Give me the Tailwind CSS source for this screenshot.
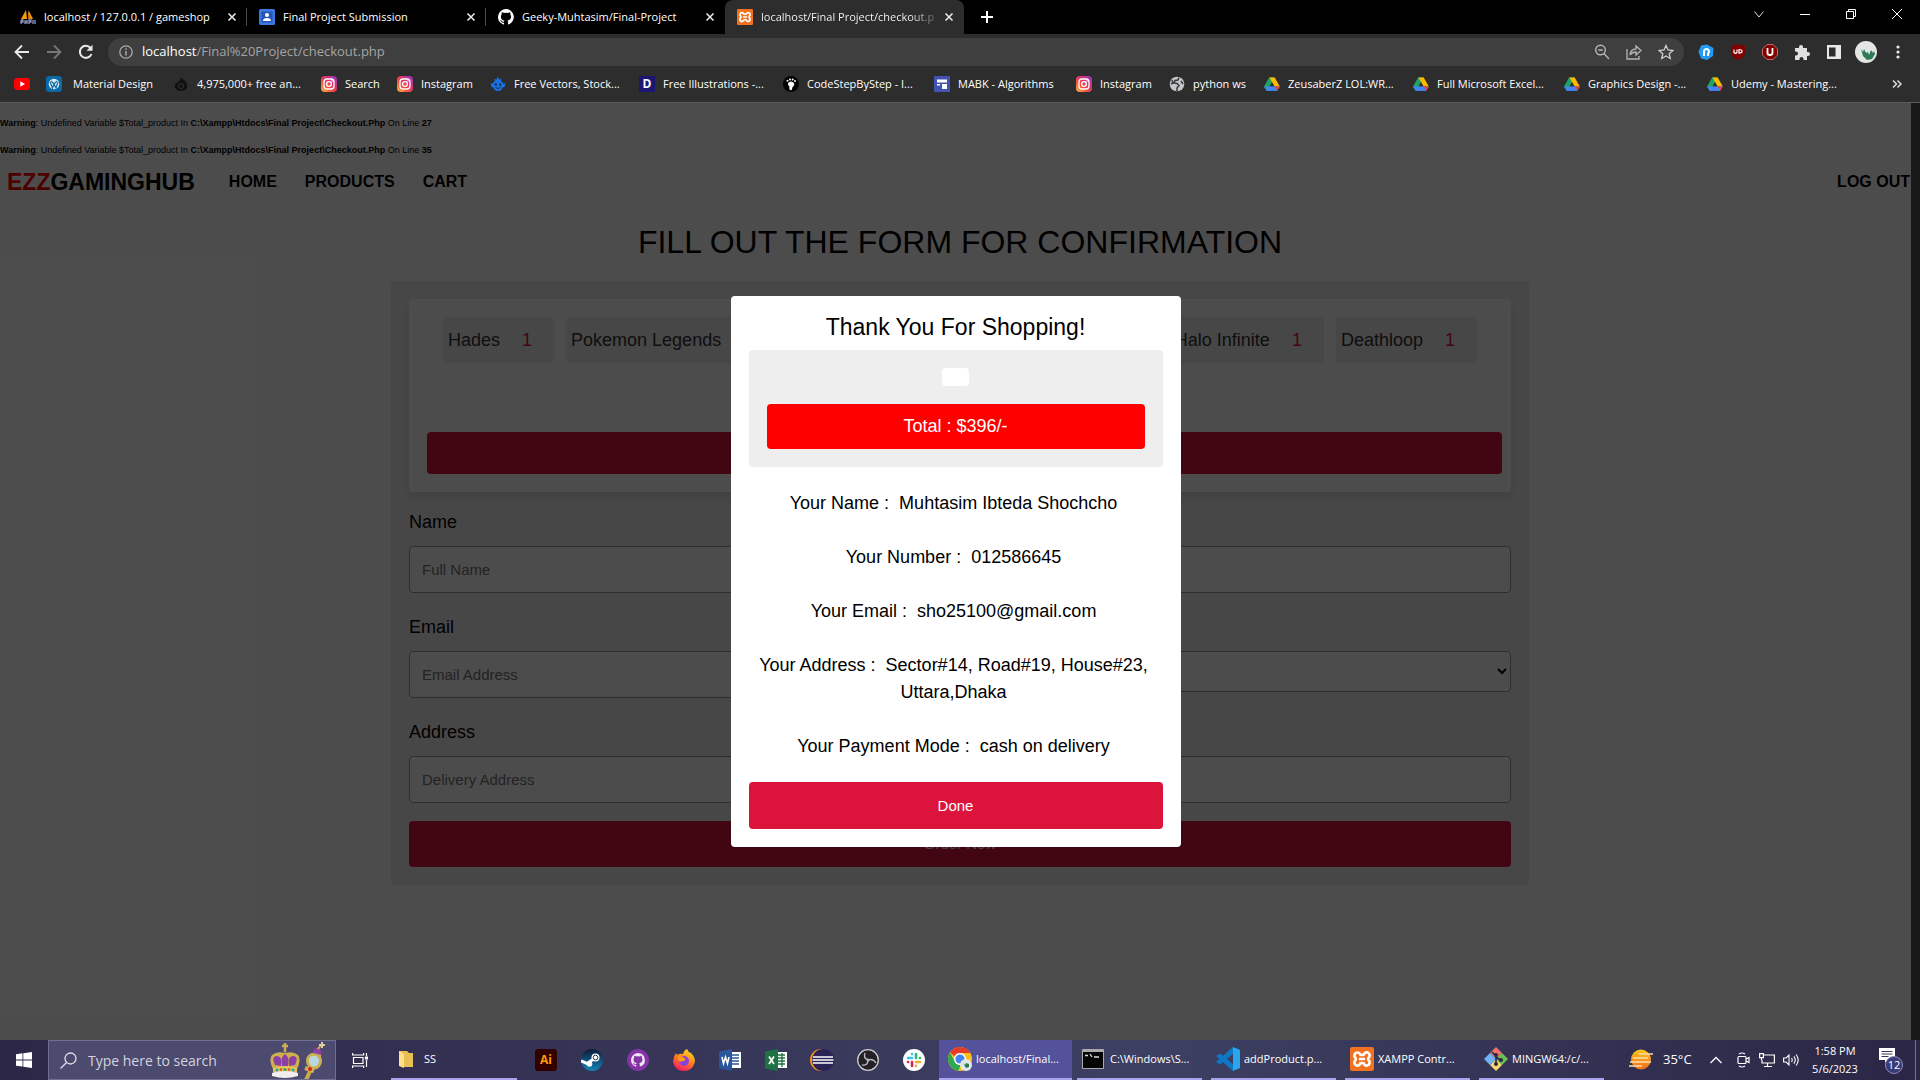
<!DOCTYPE html>
<html lang="en">
<head>
<meta charset="utf-8">
<title>localhost/Final Project/checkout.php</title>
<script src="https://cdn.jsdelivr.net/npm/@tailwindcss/browser@4"></script>
</head>
<body class="flex h-screen flex-col overflow-hidden bg-black font-['Open_Sans',sans-serif] text-white">

<svg class="absolute size-0" aria-hidden="true">
  <defs>
    <linearGradient id="ig" x1="0" y1="1" x2="1" y2="0"><stop offset="0" stop-color="#fdc04d"/><stop offset=".35" stop-color="#f4513a"/><stop offset=".65" stop-color="#d62e7c"/><stop offset="1" stop-color="#8a3ac8"/></linearGradient>
    <linearGradient id="steamg" x1="0" y1="0" x2="0" y2="1"><stop offset="0" stop-color="#0e1a38"/><stop offset="1" stop-color="#1484b8"/></linearGradient>
    <linearGradient id="ffg" x1=".8" y1="0" x2=".3" y2="1"><stop offset="0" stop-color="#ffe226"/><stop offset=".45" stop-color="#ff8a16"/><stop offset="1" stop-color="#f5156c"/></linearGradient>
    <linearGradient id="sung" x1="0" y1="0" x2="0" y2="1"><stop offset="0" stop-color="#ffc61a"/><stop offset="1" stop-color="#f26b1d"/></linearGradient>
    <symbol id="insta" viewBox="0 0 16 16"><rect width="16" height="16" rx="4" fill="url(#ig)"/><rect x="3" y="3" width="10" height="10" rx="3" fill="none" stroke="#fff" stroke-width="1.3"/><circle cx="8" cy="8" r="2.4" fill="none" stroke="#fff" stroke-width="1.3"/><circle cx="11" cy="5" r=".8" fill="#fff"/></symbol>
    <symbol id="drive" viewBox="0 0 16 16"><path d="M5.3 1.5h5.4L5.6 10.4 2.9 15 .2 10.400z" fill="#1ea362"/><path d="M5.300 1.500h5.400L15.800 10.400h-5.300z" fill="#ffba00"/><path d="M3.200 10.400h12.600L13.100 14.800H2.900L.2 10.400z" fill="#4285f4"/><path d="M5.300 1.500 8 6.200 5.600 10.400 2.900 14.800.2 10.400z" fill="#1ea362"/><path d="M10.500 10.400h5.300l-2.700 4.400z" fill="#ea4335"/><path d="M8 6.200l2.500 4.200H5.600z" fill="#2d2d2d"/><path d="M5.600 10.400H.2l2.700 4.400h10.200l-2.600-4.400z" fill="#4285f4"/></symbol>
    <symbol id="xampp" viewBox="0 0 24 24"><rect width="24" height="24" rx="2" fill="#f3721f"/><path d="M7.500 5.500a3 3 0 0 0-2 5.300q1 1.200 0 2.400a3 3 0 1 0 4.700 3.300q1.800-1 3.600 0a3 3 0 1 0 4.700-3.300q-1-1.200 0-2.400a3 3 0 1 0-4.700-3.300q-1.800 1-3.600 0a3 3 0 0 0-2.700-2zM9 12h6" fill="none" stroke="#fff" stroke-width="2.600"/></symbol>
    <symbol id="x" viewBox="0 0 10 10"><path d="M1.500 1.500l7 7m0-7l-7 7" stroke="#e8eaed" stroke-width="1.600"/></symbol>
    <symbol id="cat" viewBox="0 0 16 16"><path fill-rule="evenodd" d="M8 0a8 8 0 0 0-2.500 15.600c.4.100.5-.2.500-.4v-1.500c-2.200.5-2.700-.9-2.700-.9-.4-.9-.9-1.200-.9-1.200-.7-.5.100-.5.100-.5.800.1 1.200.8 1.200.8.700 1.300 1.900.9 2.300.7.100-.5.300-.9.500-1.100-1.800-.2-3.600-.9-3.600-4 0-.9.300-1.600.8-2.100-.1-.2-.4-1 .1-2.100 0 0 .7-.2 2.200.8a7.500 7.500 0 0 1 4 0c1.500-1 2.200-.8 2.200-.8.400 1.100.2 1.900.1 2.100.5.600.8 1.300.8 2.100 0 3.100-1.900 3.700-3.700 3.900.3.300.6.800.6 1.500v2.200c0 .2.100.5.600.4A8 8 0 0 0 8 0z"/></symbol>
  </defs>
</svg>

<!-- Tab strip -->
<header class="flex h-[34px] shrink-0 items-stretch pl-2 text-[11px]">
  <div class="flex w-[239px] items-center gap-2 pl-3 pr-2.5">
    <svg class="size-4 shrink-0" viewBox="0 0 16 16"><path d="M6 1l1 9H1zM9 2l4 8H9z" fill="#f89c0e"/><path d="M8 1v9h3z" fill="#c77a10"/><path d="M1 11v4M1 11h2v2H1M5 11v4M5 13h2M7 11v4M9 15v-4h2v2H9M13 11v4M15 11v4" stroke="#8f97c4" stroke-width="1.300" fill="none"/></svg>
    <span class="flex-1 overflow-hidden whitespace-nowrap">localhost / 127.0.0.1 / gameshop</span>
    <button aria-label="Close tab"><svg class="size-2.5"><use href="#x"/></svg></button>
  </div>
  <div class="my-2 -ml-px w-px bg-[#4a4a4a]"></div>
  <div class="flex w-[239px] items-center gap-2 pl-3 pr-2.5">
    <svg class="size-4 shrink-0" viewBox="0 0 16 16"><rect width="16" height="16" rx="1.500" fill="#3c78e0"/><rect x="2.500" y="2.500" width="11" height="11" fill="#2456b8"/><circle cx="8" cy="6" r="2" fill="#fff"/><path d="M4 12q0-3 4-3t4 3z" fill="#fff"/></svg>
    <span class="flex-1 overflow-hidden whitespace-nowrap">Final Project Submission</span>
    <button aria-label="Close tab"><svg class="size-2.5"><use href="#x"/></svg></button>
  </div>
  <div class="my-2 -ml-px w-px bg-[#4a4a4a]"></div>
  <div class="flex w-[239px] items-center gap-2 pl-3 pr-2.5">
    <svg class="size-4 shrink-0 fill-white"><use href="#cat"/></svg>
    <span class="flex-1 overflow-hidden whitespace-nowrap">Geeky-Muhtasim/Final-Project</span>
    <button aria-label="Close tab"><svg class="size-2.5"><use href="#x"/></svg></button>
  </div>
  <div class="flex w-[239px] items-center gap-2 rounded-t-lg bg-[#2d2d2d] pl-3 pr-2.5">
    <svg class="size-4 shrink-0"><use href="#xampp"/></svg>
    <span class="flex-1 overflow-hidden whitespace-nowrap bg-linear-to-r from-white from-85% to-white/20 bg-clip-text text-transparent">localhost/Final Project/checkout.p</span>
    <button aria-label="Close tab"><svg class="size-2.5"><use href="#x"/></svg></button>
  </div>
  <button class="ml-4 flex items-center" aria-label="New tab"><svg class="size-3.5" viewBox="0 0 14 14"><path d="M7 1v12M1 7h12" stroke="#fff" stroke-width="2"/></svg></button>
  <div class="ml-auto flex h-7 items-center">
    <button class="flex w-[46px] justify-center" aria-label="Search tabs"><svg class="size-3" viewBox="0 0 12 12"><path d="M1.500 3.500L6 9l4.500-5.500" fill="none" stroke="#ddd"/></svg></button>
    <button class="flex w-[46px] justify-center" aria-label="Minimize"><svg class="size-3" viewBox="0 0 12 12"><path d="M1 6.500h10" stroke="#fff"/></svg></button>
    <button class="flex w-[46px] justify-center" aria-label="Restore"><svg class="size-3" viewBox="0 0 12 12"><path d="M1.500 3.500h7v7h-7zM3.500 3.500v-2h7v7h-2" fill="none" stroke="#fff"/></svg></button>
    <button class="flex w-[46px] justify-center" aria-label="Close"><svg class="size-3" viewBox="0 0 12 12"><path d="M1 1l10 10M11 1L1 11" stroke="#fff"/></svg></button>
  </div>
</header>

<!-- Address bar -->
<div class="flex h-9 shrink-0 items-center bg-[#2d2d2d]">
  <div class="flex w-[108px] items-center gap-4 pl-3.5">
    <button aria-label="Back"><svg class="size-4" viewBox="0 0 16 16"><path d="M15 8H2M8 1.500L1.500 8 8 14.500" fill="none" stroke="#e8eaed" stroke-width="1.800"/></svg></button>
    <button aria-label="Forward"><svg class="size-4" viewBox="0 0 16 16"><path d="M1 8h13M8 1.500L14.500 8 8 14.500" fill="none" stroke="#777" stroke-width="1.800"/></svg></button>
    <button aria-label="Reload"><svg class="size-4" viewBox="0 0 16 16"><path d="M13.500 10A6 6 0 1 1 12.500 4" fill="none" stroke="#e8eaed" stroke-width="2"/><path d="M14.500.800v6h-6z" fill="#e8eaed"/></svg></button>
  </div>
  <div class="flex h-7 flex-1 items-center rounded-full bg-[#3f3f3f] pl-[11px] pr-2.5 text-[13px]">
    <svg class="mr-[9px] size-3.5" viewBox="0 0 14 14"><circle cx="7" cy="7" r="6.200" fill="none" stroke="#aaa" stroke-width="1.300"/><path d="M7 6v4.500M7 3.300v1.500" stroke="#aaa" stroke-width="1.500"/></svg>
    <span class="text-[#a5a5a5]"><span class="text-white">localhost</span>/Final%20Project/checkout.php</span>
    <div class="ml-auto flex gap-4">
      <svg class="size-4" viewBox="0 0 16 16" fill="none" stroke="#b5b5b5" stroke-width="1.400"><circle cx="6.500" cy="6" r="4.800"/><path d="M10 9.500l5 5.500M4.300 6h4.400"/></svg>
      <svg class="size-4" viewBox="0 0 16 16" fill="none" stroke="#b5b5b5" stroke-width="1.300"><path d="M1 5v10h12v-3M4 11q.5-6 6-6V2l5 4.500-5 4.500V8q-4 0-6 3z"/></svg>
      <svg class="size-4" viewBox="0 0 16 16" fill="none" stroke="#ccc" stroke-width="1.300"><path d="M8 1.500l2 4.500 4.900.5-3.700 3.200 1.100 4.800L8 12l-4.300 2.500 1.100-4.800L1.100 6.500 6 6z"/></svg>
    </div>
  </div>
  <div class="flex w-[236px] items-center gap-4 pl-3.5">
    <svg class="size-4" viewBox="0 0 16 16"><path d="M3 1.500L9 .5l6.500 3.500-.5 8-6 4-6-1.500L.5 8z" fill="#219bf5"/><path d="M6 12V7.500a2.500 2.500 0 1 1 4 2V12" fill="none" stroke="#fff" stroke-width="2"/></svg>
    <svg class="size-4" viewBox="0 0 16 16"><path d="M8 0q3 2 7 1.800V9q-1 5-7 7Q2 14 1 9V1.800Q5 2 8 0z" fill="#800000"/><path d="M4 5.500v3q1.500 1.500 3 0v-3M9 5.500v3.600q3.500 0 3-2-.2-1.600-3-1.600z" fill="none" stroke="#fff" stroke-width="1.200"/></svg>
    <svg class="size-4" viewBox="0 0 16 16"><path d="M5 .5h6L15.500 5v6L11 15.500H5L.5 11V5z" fill="#800000" stroke="#c66"/><path d="M5.500 4v5q0 2 2.500 2t2.500-2V4" fill="none" stroke="#fff" stroke-width="1.800"/></svg>
    <svg class="size-4" viewBox="0 0 16 16"><path d="M1 4h4V3a2 2 0 1 1 4 0v1h4v4h1a2 2 0 1 1 0 4h-1v4H9.500v-1a2 2 0 1 0-4 0v1H1v-4.500h1a2 2 0 1 0 0-4H1z" fill="#e0e0e0"/></svg>
    <svg class="size-4" viewBox="0 0 16 16"><path d="M1 1h14v14H1zM3 3.500v9h6.500v-9z" fill="#e8e8e8" fill-rule="evenodd"/></svg>
    <svg class="-mx-[3px] size-[22px]" viewBox="0 0 22 22"><circle cx="11" cy="11" r="11" fill="#e4e6e4"/><path d="M6 8l2 3 1-3 2 4 2-1 1 3 2-5 2 3 1-2 1 3-3 5-5 1-4-4z" fill="#2c7a56"/></svg>
    <svg class="size-4" viewBox="0 0 16 16" fill="#e8eaed"><circle cx="8" cy="3" r="1.600"/><circle cx="8" cy="8" r="1.600"/><circle cx="8" cy="13" r="1.600"/></svg>
  </div>
</div>

<!-- Bookmarks -->
<nav class="flex h-[33px] shrink-0 items-center border-b border-[#5a5a5a] bg-[#2d2d2d] pb-1 pl-3.5 text-[11px] whitespace-nowrap" aria-label="Bookmarks">
  <a href="#" class="w-8" aria-label="YouTube"><svg class="size-4" viewBox="0 0 16 16"><rect y="2" width="16" height="12" rx="3" fill="#f00"/><path d="M6.300 5.300v5.400L11 8z" fill="#fff"/></svg></a>
  <a href="#" class="flex w-[127px] items-center gap-[11px]"><svg class="size-4" viewBox="0 0 16 16"><rect width="16" height="16" rx="3" fill="#0b69a5"/><circle cx="8" cy="8" r="5.300" fill="#dcebf5"/><path d="M4 6l2.500 6L8 8l2 4 2-6M5 5l3 3 3-3" fill="none" stroke="#0b69a5" stroke-width="1.200"/></svg>Material Design</a>
  <a href="#" class="flex w-[148px] items-center gap-2"><svg class="size-4" viewBox="0 0 16 16"><path d="M8 1q1 2 4 4 3 3 2 7-2 3-6 3t-6-3q-1-4 3-6 3-2 3-5z" fill="#111"/><circle cx="8" cy="10" r="2.500" fill="none" stroke="#333"/></svg>4,975,000+ free an...</a>
  <a href="#" class="flex w-[76px] items-center gap-2"><svg class="size-4"><use href="#insta"/></svg>Search</a>
  <a href="#" class="flex w-[93px] items-center gap-2"><svg class="size-4"><use href="#insta"/></svg>Instagram</a>
  <a href="#" class="flex w-[149px] items-center gap-2"><svg class="size-4" viewBox="0 0 16 16"><path d="M2.500 8Q3 6 5 5L4.500 2.500l2 1.200L8 .5l1.500 3.200 2-1.200L11 5q2 1 2.500 3l2-1-1 4-2 .5Q11.500 15 8 15t-4.500-3.500l-2-.5-1-4z" fill="#1273eb"/><circle cx="5.800" cy="8.500" r="1.200" fill="#2d2d2d"/><circle cx="10.200" cy="8.500" r="1.200" fill="#2d2d2d"/><path d="M5.500 11.500q2.500 2 5 0" stroke="#2d2d2d" fill="none"/></svg>Free Vectors, Stock...</a>
  <a href="#" class="flex w-36 items-center gap-2"><span class="flex size-4 items-center justify-center bg-[#1b1673] text-[12px] font-bold">D</span>Free Illustrations -...</a>
  <a href="#" class="flex w-[151px] items-center gap-2"><svg class="size-4" viewBox="0 0 16 16"><circle cx="8" cy="8" r="8" fill="#000"/><path d="M5 7q3-3 6 0 1 2-1 3.500-1 1-1 3-1.500 1.500-2.500 0-.5-2 0-3Q4.500 9 5 7z" fill="#fff"/><g fill="#fff"><circle cx="4.500" cy="4.800" r="1"/><circle cx="7" cy="3.500" r="1"/><circle cx="9.700" cy="3.500" r="1"/><circle cx="12" cy="5" r="1"/></g></svg>CodeStepByStep - I...</a>
  <a href="#" class="flex w-[142px] items-center gap-2"><svg class="size-4" viewBox="0 0 16 16"><rect width="16" height="16" fill="#4153af"/><path d="M3 3.500h10v3H3zM3 8h3v1.500H3zM8 8h5v5H8z" fill="#fff"/></svg>MABK - Algorithms</a>
  <a href="#" class="flex w-[93px] items-center gap-2"><svg class="size-4"><use href="#insta"/></svg>Instagram</a>
  <a href="#" class="flex w-[95px] items-center gap-2"><svg class="size-4" viewBox="0 0 16 16"><circle cx="8" cy="8" r="7.300" fill="#c4c7ca"/><path d="M10 1.500L9 4 6 4.500 5 7l3 .5 2 2L8 12v3M3 4l1 3-2 1M12 5l2 3" fill="none" stroke="#3a3a3a" stroke-width="1.500"/></svg>python ws</a>
  <a href="#" class="flex w-[149px] items-center gap-2"><svg class="size-4"><use href="#drive"/></svg>ZeusaberZ LOL:WR...</a>
  <a href="#" class="flex w-[151px] items-center gap-2"><svg class="size-4"><use href="#drive"/></svg>Full Microsoft Excel...</a>
  <a href="#" class="flex w-[143px] items-center gap-2"><svg class="size-4"><use href="#drive"/></svg>Graphics Design -...</a>
  <a href="#" class="flex items-center gap-2"><svg class="size-4"><use href="#drive"/></svg>Udemy - Mastering...</a>
  <button class="ml-auto pr-[18px]" aria-label="More bookmarks"><svg class="size-2.5" viewBox="0 0 10 10"><path d="M1 1.500L4.500 5 1 8.500M5.500 1.500L9 5 5.500 8.500" fill="none" stroke="#ddd" stroke-width="1.500"/></svg></button>
</nav>

<!-- Web page -->
<div class="relative flex-1 overflow-hidden bg-white font-['Liberation_Sans',Arial,sans-serif] text-black">
  <div class="pt-[7px] text-[9px] leading-[27px]">
    <p><b>Warning</b>: Undefined Variable $Total_product In <b>C:\Xampp\Htdocs\Final Project\Checkout.Php</b> On Line <b>27</b></p>
    <p><b>Warning</b>: Undefined Variable $Total_product In <b>C:\Xampp\Htdocs\Final Project\Checkout.Php</b> On Line <b>35</b></p>
  </div>
  <nav class="flex h-9 items-center gap-7 pl-[7px] pr-2.5 text-[16px] font-bold">
    <a href="#" class="mr-1.5 text-[23px] leading-8"><span class="text-[#f00]">EZZ</span>GAMINGHUB</a>
    <a href="#">HOME</a>
    <a href="#">PRODUCTS</a>
    <a href="#">CART</a>
    <a href="#" class="ml-auto">LOG OUT</a>
  </nav>
  <h1 class="mt-[22px] text-center text-[32px] leading-10">FILL OUT THE FORM FOR CONFIRMATION</h1>

  <form class="mx-auto mt-[19px] max-w-[1138px] rounded bg-[#eee] p-[18px] text-[18px] leading-6">
    <div class="rounded bg-white p-[18px] shadow-[0_4px_9px_rgba(0,0,0,0.1)]">
      <div class="flex h-[115px] items-start justify-between px-4">
        <div class="flex gap-3">
          <div class="flex h-[46px] items-center gap-[22px] rounded bg-[#eee] pl-[5px] pr-[22px] text-[#333]">Hades<span class="text-[#dc143c]">1</span></div>
          <div class="flex h-[46px] items-center gap-[22px] rounded bg-[#eee] pl-[5px] pr-[22px] text-[#333]">Pokemon Legends</div>
        </div>
        <div class="flex gap-3">
          <div class="flex h-[46px] items-center gap-[22px] rounded bg-[#eee] pl-[5px] pr-[22px] text-[#333]">Halo Infinite<span class="text-[#dc143c]">1</span></div>
          <div class="flex h-[46px] items-center gap-[22px] rounded bg-[#eee] pl-[5px] pr-[22px] text-[#333]">Deathloop<span class="text-[#dc143c]">1</span></div>
        </div>
      </div>
      <div class="mr-[-9px] h-[42px] rounded bg-[#dc143c]"></div>
    </div>

    <div class="mt-[18px] grid grid-cols-2 gap-x-[18px] gap-y-[22px]">
      <div>
        <label for="name" class="mb-3 block">Name</label>
        <input id="name" type="text" placeholder="Full Name" class="h-[47px] w-full rounded border border-[#999] bg-white px-3 text-[15px] placeholder:text-[#757575]">
      </div>
      <div class="pt-9"><input aria-label="Number" type="text" class="h-[47px] w-full rounded border border-[#999] bg-white px-3 text-[15px]"></div>
      <div>
        <label for="email" class="mb-3 block">Email</label>
        <input id="email" type="email" placeholder="Email Address" class="h-[47px] w-full rounded border border-[#999] bg-white px-3 text-[15px] placeholder:text-[#757575]">
      </div>
      <div class="pt-9"><select aria-label="Payment method" class="h-[41px] w-full rounded border border-[#999] bg-white px-2 text-[15px]"><option></option></select></div>
      <div>
        <label for="address" class="mb-3 block">Address</label>
        <input id="address" type="text" placeholder="Delivery Address" class="h-[47px] w-full rounded border border-[#999] bg-white px-3 text-[15px] placeholder:text-[#757575]">
      </div>
      <div class="pt-9"><input aria-label="City" type="text" class="h-[47px] w-full rounded border border-[#999] bg-white px-3 text-[15px]"></div>
    </div>
    <button type="button" class="mt-[18px] block h-[46px] w-full rounded bg-[#dc143c] text-[15px] text-[#eee]">Order Now</button>
  </form>

  <!-- Confirmation dialog -->
  <div class="absolute inset-y-0 left-0 right-[9px] flex items-center justify-center bg-black/70">
    <div role="dialog" aria-label="Thank You For Shopping!" class="w-[450px] rounded bg-white p-[18px] text-center text-[18px] leading-[27px]">
      <h2 class="text-[23px]">Thank You For Shopping!</h2>
      <div class="mt-[9px] rounded bg-[#eee] p-[18px]">
        <div class="mx-auto h-[18px] w-[27px] rounded bg-white"></div>
        <div class="mt-[18px] rounded bg-[#f00] py-[9px] text-white">Total : $396/-</div>
      </div>
      <div class="flex flex-col gap-[27px] pb-[22px] pr-1 pt-[23px]">
        <p>Your Name : &nbsp;Muhtasim Ibteda Shochcho</p>
        <p>Your Number : &nbsp;012586645</p>
        <p>Your Email : &nbsp;sho25100@gmail.com</p>
        <p>Your Address : &nbsp;Sector#14, Road#19, House#23, Uttara,Dhaka</p>
        <p>Your Payment Mode : &nbsp;cash on delivery</p>
      </div>
      <button type="button" class="block h-[47px] w-full rounded bg-[#dc143c] text-[15px] text-white">Done</button>
    </div>
  </div>
  <div class="absolute inset-y-0 right-0 w-[9px] bg-[#181818]"></div>
</div>

<!-- Taskbar -->
<footer class="flex h-10 shrink-0 items-stretch bg-linear-to-r from-[#2d2747] via-[#3d4063] via-60% to-[#2b2645] text-[11px] whitespace-nowrap">
  <button class="flex w-12 items-center justify-center" aria-label="Start"><svg class="size-4" viewBox="0 0 16 16" fill="#fff"><path d="M0 2.200L6.500 1.300v6.200H0zM7.300 1.200L16 0v7.500H7.300zM0 8.400h6.500v6.200L0 13.700zM7.300 8.400H16V16l-8.700-1.200z"/></svg></button>
  <label class="flex w-[288px] items-center border border-[#706e92] bg-[#4c4a6e] pl-[11px]">
    <svg class="mr-[11px] size-[17px]" viewBox="0 0 17 17" fill="none" stroke="#e0e0ea" stroke-width="1.300"><circle cx="10.500" cy="6.500" r="5.500"/><path d="M6.500 10.500L.5 16.500"/></svg>
    <input type="text" placeholder="Type here to search" aria-label="Type here to search" class="w-[170px] text-[14px] placeholder:text-[#d4d3df]">
    <svg class="ml-[11px] h-[38px] w-[60px]" viewBox="0 0 60 38"><path d="M5 30Q-1 19 3 14q5-4 12-2l1-1 1 1q7-2 12 2 4 5-2 16z" fill="#cdb14d"/><path d="M6 24q-4-8 1-9 5 0 5 4v6zM26 24q4-8-1-9-5 0-5 4v6zM13 25q-2-9 3-12 5 3 3 12z" fill="#8d3fa6"/><path d="M16 2v9M13 5h6" stroke="#c9ad55" stroke-width="2.500"/><path d="M4 27q12-4 24 0v5q-12-3-24 0z" fill="#e4c45c"/><g fill="#1aa6b0"><circle cx="8" cy="29" r="1.500"/><circle cx="24" cy="29" r="1.500"/></g><circle cx="12" cy="28.500" r="1.300" fill="#e04a2a"/><circle cx="16" cy="28.500" r="1.500" fill="#28a04c"/><circle cx="20" cy="28.500" r="1.300" fill="#e04a2a"/><path d="M3 32q13-4 26 0v3q-13 4-26 0z" fill="#f1eeee"/><path d="M43 26L37 39" stroke="#cdaa48" stroke-width="4"/><ellipse cx="45" cy="20" rx="6.500" ry="7" fill="#b8d9e2" stroke="#cbb052" stroke-width="3"/><path d="M36 27l9 3" stroke="#cbb052" stroke-width="4"/><circle cx="41" cy="28" r="2" fill="#d82222"/><path d="M44 13q0-6 5-7 4 2 3 9z" fill="#8d3fa6"/><path d="M44 13l8 2M49 8l3-4" stroke="#cbb052" stroke-width="2"/><path d="M53 7V1M50 4h6" stroke="#ddd0a0" stroke-width="2"/></svg>
  </label>
  <button class="flex w-[55px] items-center pl-4" aria-label="Task view"><svg class="size-4" viewBox="0 0 16 16" fill="none" stroke="#fff" stroke-width="1.200"><path d="M.6 1v2h11V1M.6 16v-2h11v2M1.500 5.500h9.500v6H1.500zM14.500 1v3m0 4v7"/><path d="M13.500 5h2v2h-2z" fill="#fff"/></svg></button>
  <button class="flex w-[126px] items-center gap-2.5 border-b-2 border-[#aaa3f0] pl-2"><svg class="h-[18px] w-[15px]" viewBox="0 0 15 18"><path d="M0 1h8l2 2h4v14H2z" fill="#eabf54"/><path d="M0 1l5 3v14l-5-2z" fill="#ffe08b"/></svg>SS</button>
  <div class="ml-[18px] flex items-center gap-6">
    <span class="flex size-[22px] items-center justify-center rounded-[3px] bg-[#330000] text-[12px] font-bold text-[#ff9a00]">Ai</span>
    <svg class="size-[22px]" viewBox="0 0 22 22"><circle cx="11" cy="11" r="11" fill="url(#steamg)"/><path d="M0 12l6 2.500 6-4" stroke="#fff" stroke-width="3" fill="none"/><circle cx="14.500" cy="8.500" r="4" fill="#fff"/><circle cx="14.500" cy="8.500" r="2.300" fill="none" stroke="#1a3a66"/><circle cx="8.500" cy="15" r="2.800" fill="#fff"/></svg>
    <svg class="size-[22px]" viewBox="0 0 22 22"><circle cx="11" cy="11" r="11" fill="#8534a6"/><svg x="4" y="4" width="14" height="14" fill="#f0e4f5"><use href="#cat"/></svg></svg>
    <svg class="size-[22px]" viewBox="0 0 22 22"><path d="M14 0q1 3 4 4 5 5 3.500 10Q19 22 11 22 2 22 0 13 0 8 3 4l1 2q3-2 6-1 1-4 4-5z" fill="url(#ffg)"/><circle cx="11" cy="12" r="5" fill="#8b40d8"/><path d="M5 8q4-2 6 1 3 1 0 3-3 0-4 1-2-1-2-5z" fill="#ff9a1c"/></svg>
    <svg class="size-[22px]" viewBox="0 0 22 22"><path d="M11 3h11v16H11z" fill="#fff"/><path d="M13 6h7M13 9h7M13 12h7M13 15h7" stroke="#2b579a" stroke-width="1.300"/><path d="M0 2.500L13 0v22L0 19.500z" fill="#2b579a"/><path d="M3 8l1.500 6.500L6.500 8l2 6.500L10 8" fill="none" stroke="#fff" stroke-width="1.500"/></svg>
    <svg class="size-[22px]" viewBox="0 0 22 22"><path d="M11 3h11v16H11z" fill="#fff"/><path d="M13 6h7M13 9h7M13 12h7M13 15h7M17 4v14" stroke="#1f7244" stroke-width="1.300"/><path d="M0 2.500L13 0v22L0 19.500z" fill="#1f7244"/><path d="M4 7.500l5 7.500M9 7.500L4 15" stroke="#fff" stroke-width="1.700"/></svg>
    <svg class="-mx-px size-6" viewBox="0 0 24 24"><circle cx="11" cy="12" r="11" fill="#f7941e"/><circle cx="13" cy="12" r="11" fill="#2c2255"/><path d="M3 9h20M2.500 12h21M3 15h20" stroke="#fff" stroke-width="1.500"/></svg>
    <svg class="size-[22px]" viewBox="0 0 22 22"><circle cx="11" cy="11" r="10.300" fill="#222024" stroke="#ccc" stroke-width="1.300"/><g fill="none" stroke="#b8b6ba" stroke-width="1.400"><path d="M11 11q-5-2-3-7M11 11q5-2 8 3M11 11q0 6-6 5"/></g><circle cx="11" cy="11" r="1.500" fill="#b8b6ba"/></svg>
    <svg class="size-[22px]" viewBox="0 0 22 22"><circle cx="11" cy="11" r="11" fill="#fff"/><g fill="none" stroke-width="2.600" stroke-linecap="round"><path d="M9 5v.1M5 9h4" stroke="#36c5f0"/><path d="M13 5v4M17 9h-.1" stroke="#2eb67d"/><path d="M13 13h4M13 17v-.1" stroke="#ecb22e"/><path d="M9 13v4M5 13h.1" stroke="#e01e5a"/></g></svg>
  </div>
  <button class="ml-[14px] flex w-[133px] items-center gap-1 border-b-2 border-[#aaa3f0] bg-[#53529a] pl-[9px]"><svg class="size-6" viewBox="0 0 24 24"><circle cx="12" cy="12" r="12" fill="#fbc116"/><path d="M12 0a12 12 0 0 1 10.400 6H12a6 6 0 0 0-5.400 3.300L2 5.500A12 12 0 0 1 12 0z" fill="#e33b2e"/><path d="M2 5.500L7 15a6 6 0 0 0 6 3l-3 5.900A12 12 0 0 1 2 5.500z" fill="#2da94f"/><circle cx="12" cy="12" r="6" fill="#fff"/><circle cx="12" cy="12" r="4.600" fill="#4285f4"/><circle cx="18" cy="18" r="6" fill="#e4e6e4"/><path d="M15 16l2 2 1-2 3 1v3l-3 1z" fill="#2c7a56"/></svg>localhost/Final...</button>
  <button class="ml-[5px] flex w-[125px] items-center gap-1.5 border-b-2 border-[#aaa3f0] pl-[5px]"><svg class="h-5 w-[22px]" viewBox="0 0 22 20"><rect width="22" height="20" rx="1" fill="#aaa"/><rect x="1" y="3" width="20" height="16" fill="#050505"/><path d="M3 6.500h3M8 5l2 3M12 8h5" stroke="#ddd" stroke-width="1.300"/></svg>C:\Windows\S...</button>
  <button class="ml-[9px] flex w-[125px] items-center gap-1 border-b-2 border-[#aaa3f0] pl-[5px]"><svg class="size-6" viewBox="0 0 24 24"><path d="M17 0l7 3v18l-7 3z" fill="#2aa5ee"/><path d="M17 0v7L4 17.500 0 15zM0 9l4-2.500L17 17v7z" fill="#0e78c4"/></svg>addProduct.p...</button>
  <button class="ml-[9px] flex w-[125px] items-center gap-1 border-b-2 border-[#aaa3f0] pl-[5px]"><svg class="size-6"><use href="#xampp"/></svg>XAMPP Contr...</button>
  <button class="ml-[9px] flex w-[125px] items-center gap-1 border-b-2 border-[#aaa3f0] pl-[5px]"><svg class="size-6" viewBox="0 0 24 24"><path d="M12 0l6 6-6 6-6-6z" fill="#f0706e"/><path d="M18 6l6 6-6 6-6-6z" fill="#6cc24f"/><path d="M12 12l6 6-6 6-6-6z" fill="#f5d76a"/><path d="M6 6l6 6-6 6-6-6z" fill="#6fb2f5"/><path d="M8 5l4 4v9M12 10l4 3" stroke="#2c2846" stroke-width="1.600" fill="none"/><g fill="#2c2846"><circle cx="12" cy="8" r="2"/><circle cx="12" cy="17" r="2"/><circle cx="17" cy="13" r="2"/></g></svg>MINGW64:/c/...</button>
  <div class="ml-auto flex items-center">
    <svg class="h-[22px] w-6" viewBox="0 0 24 22"><circle cx="12" cy="10.500" r="10" fill="url(#sung)"/><path d="M10 5h14M4 9h15M1 13h21M0 17h13" stroke="#f5dfb4" stroke-width="1.600"/></svg>
    <span class="ml-2.5 w-[46px] text-[13px]">35°C</span>
    <svg class="mr-3 size-3.5" viewBox="0 0 14 14"><path d="M1.500 10L7 4.500 12.500 10" fill="none" stroke="#fff" stroke-width="1.300"/></svg>
    <svg class="mr-2 size-4" viewBox="0 0 16 16" fill="none" stroke="#fff" stroke-width="1.200"><rect x="3" y="4.500" width="8" height="7" rx="1"/><path d="M11 7l3-1.500v5L11 9M4 2q3-2 6 0M4 14q3 2 6 0"/></svg>
    <svg class="mr-2 size-4" viewBox="0 0 16 16" fill="none" stroke="#fff" stroke-width="1.200"><path d="M5 3h10.400v8H3V8M8.500 11v3.500M5 14.500h8"/><path d="M.6 1.600h3.800v4H.6zM2.500 5.600V8"/></svg>
    <svg class="size-4" viewBox="0 0 16 16" fill="none" stroke="#fff" stroke-width="1.100"><path d="M.6 6v4h2.500L6 13V3L3.100 6zM8.500 6q1.500 2 0 4M10.800 4.300q3 3.700 0 7.400M13 2.500q4.500 5.500 0 11"/></svg>
    <div class="ml-2 w-[56px] text-center leading-[18px]">1:58 PM<br>5/6/2023</div>
    <div class="relative ml-4 mr-3 size-6">
      <svg class="size-4" viewBox="0 0 16 16"><path d="M0 0h16v12H9l-3 3v-3H0z" fill="#fff"/><path d="M2.500 3.500h11M2.500 6h11M2.500 8.500h7" stroke="#39345a"/></svg>
      <span class="absolute left-1.5 top-2 flex size-[18px] items-center justify-center rounded-full border border-[#8a8ab8] bg-[#3b3a78] text-[11px]">12</span>
    </div>
    <div class="mr-1 h-10 w-px bg-[#77738f]"></div>
  </div>
</footer>
</body>
</html>
